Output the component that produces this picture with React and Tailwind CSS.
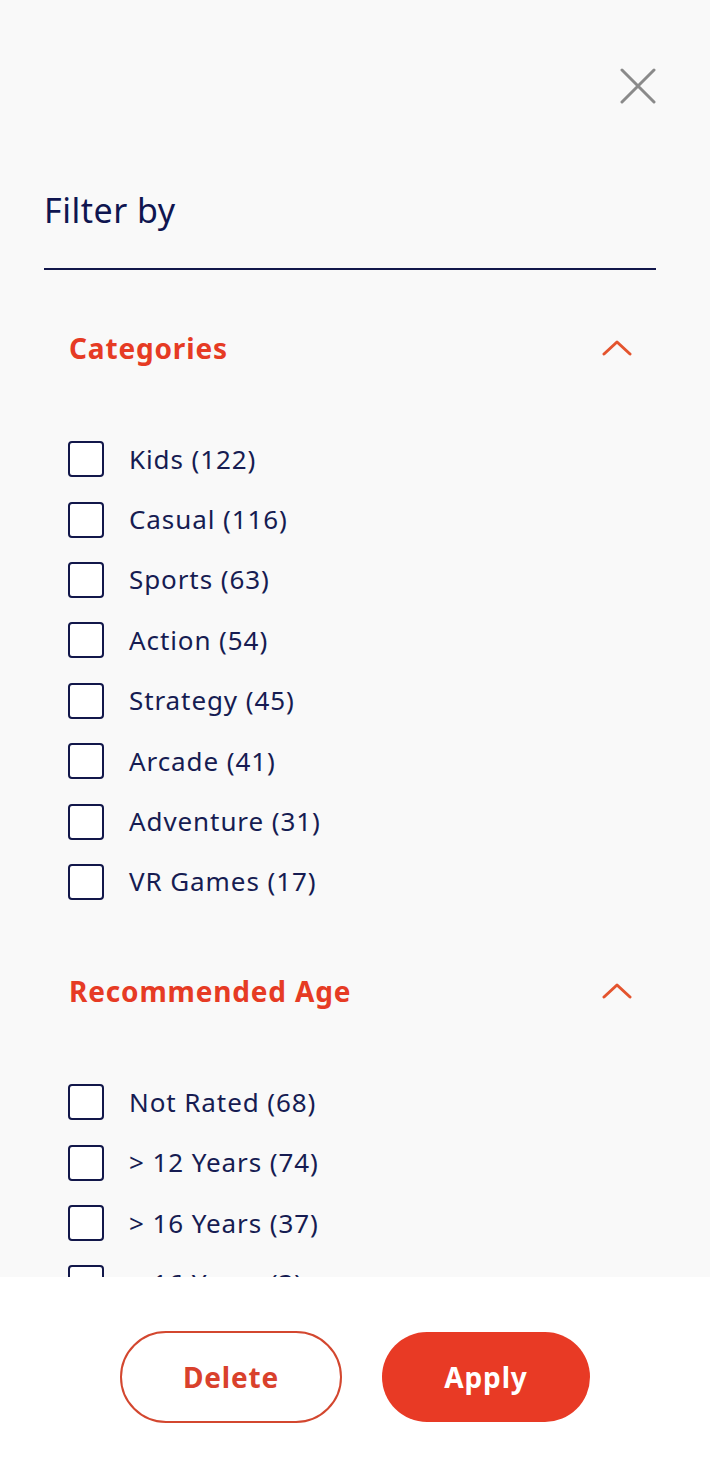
const categories = [
  'Kids (122)',
  'Casual (116)',
  'Sports (63)',
  'Action (54)',
  'Strategy (45)',
  'Arcade (41)',
  'Adventure (31)',
  'VR Games (17)',
];

const ages = ['Not Rated (68)', '> 12 Years (74)', '> 16 Years (37)', '> 16 Years (3)'];

const font = { fontFamily: '"Noto Sans", "Open Sans", sans-serif' };

const Chevron = () => (
  <svg width="30" height="16" viewBox="0 0 30 16" fill="none">
    <path d="M2 14 L15 2 L28 14" stroke="#e4542e" strokeWidth="3" strokeLinecap="round" strokeLinejoin="round" />
  </svg>
);

const Section = ({ title, items, className = '' }) => (
  <div className={className}>
    <div className="flex items-center justify-between h-[40px] pl-[25px] pr-[24px]">
      <span className="text-[28px] font-bold text-[#e63b24] tracking-[0.03em]">{title}</span>
      <Chevron />
    </div>
    <ul className="mt-[61px] pl-[24px]">
      {items.map((item, i) => (
        <li key={i} className="flex items-center h-[60.4px]">
          <span className="w-[36px] h-[36px] rounded-[4px] border-2 border-[#12174a] bg-white shrink-0" />
          <span className="ml-[25px] text-[26px] text-[#161c52] tracking-[0.035em]">{item}</span>
        </li>
      ))}
    </ul>
  </div>
);

export default function App() {
  return (
    <div className="w-[710px] h-[1470px] flex flex-col bg-[#f9f9f9]" style={font}>
      <div className="flex-1 overflow-hidden pl-[44px] pr-[54px]">
        <div className="flex justify-end pt-[68px]">
          <button className="w-[36px] h-[36px]">
            <svg width="36" height="36" viewBox="0 0 36 36" fill="none">
              <path d="M2 2 L34 34 M34 2 L2 34" stroke="#8a8a8a" strokeWidth="3" strokeLinecap="round" />
            </svg>
          </button>
        </div>
        <h2 className="mt-[86px] text-[34px] leading-[40px] text-[#0f1550] tracking-[0.015em]">Filter by</h2>
        <div className="mt-[38px] border-b-2 border-[#12174a]" />
        <Section title="Categories" items={categories} className="mt-[58px]" />
        <Section title="Recommended Age" items={ages} className="mt-[59px]" />
      </div>
      <div className="h-[193px] bg-white flex items-center justify-center gap-[40px] pt-[6px]">
        <button className="w-[222px] h-[92px] rounded-full border-2 border-[#d3472f] text-[28px] font-bold text-[#d9412c] bg-white tracking-[0.03em]">
          Delete
        </button>
        <button className="w-[208px] h-[90px] rounded-full bg-[#e83a25] text-[28px] font-bold text-white tracking-[0.03em]">
          Apply
        </button>
      </div>
    </div>
  );
}
